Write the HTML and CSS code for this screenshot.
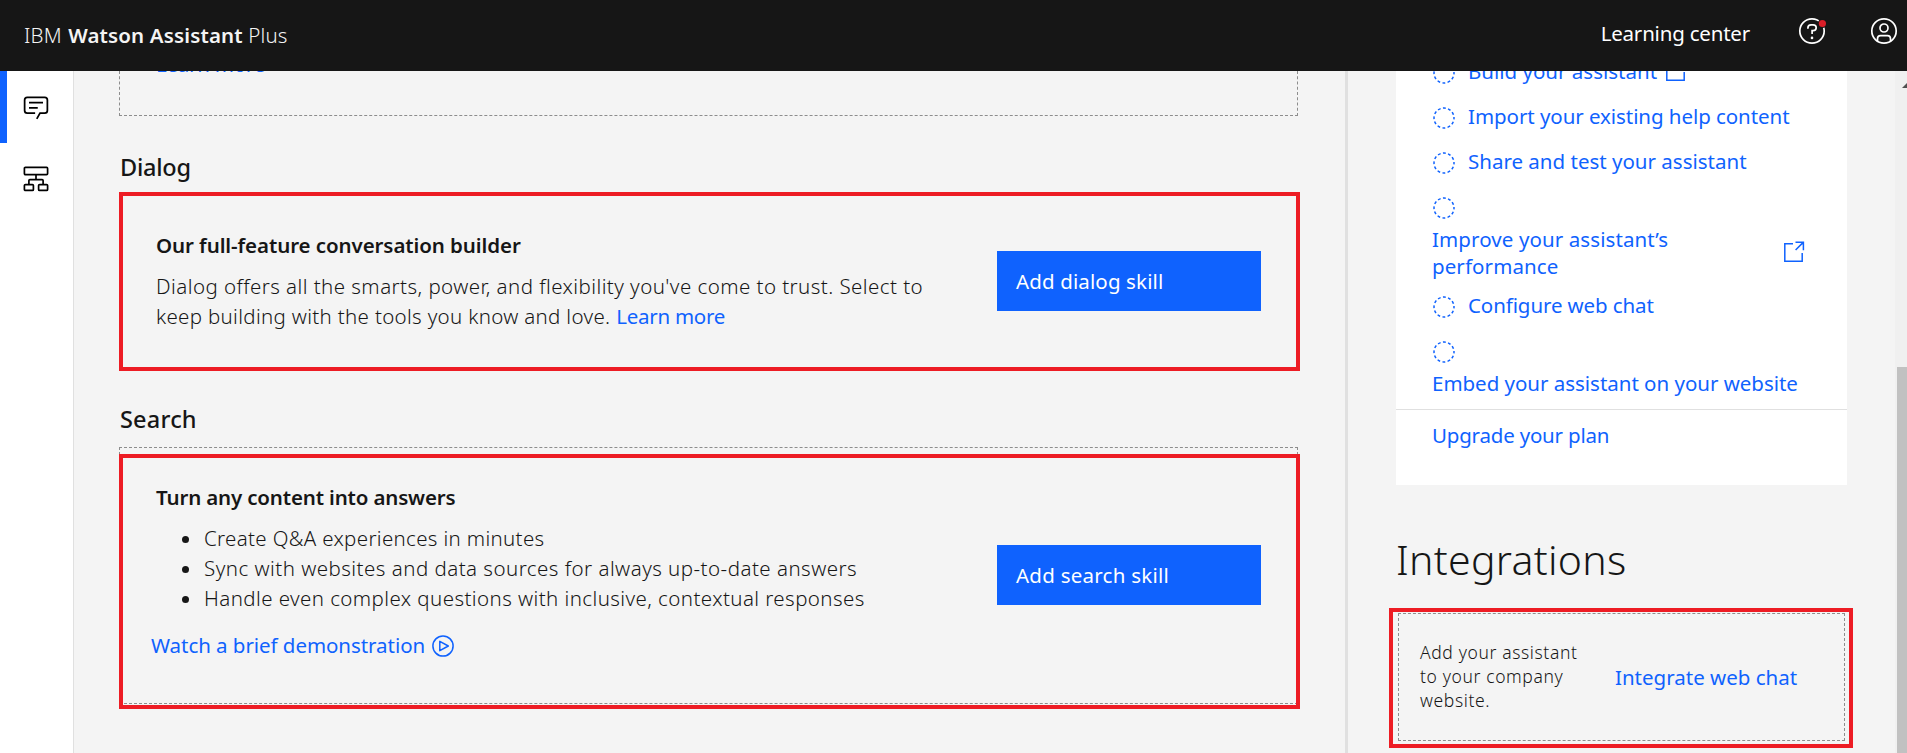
FILE: index.html
```html
<!DOCTYPE html>
<html lang="en">
<head>
<meta charset="utf-8">
<title>IBM Watson Assistant Plus</title>
<link rel="stylesheet" href="styles.css">
</head>
<body>
<svg class="defs" width="0" height="0">
  <symbol id="dash" viewBox="0 0 22 22"><circle cx="11" cy="11" r="10" fill="none" stroke="currentColor" stroke-width="1.5" stroke-dasharray="2.9 2.336" stroke-dashoffset="1.4"/></symbol>
  <symbol id="launch" viewBox="0 0 22 22"><path d="M10 2.8H1.8V20.2H19.2V12M12.5 1.2H20.4V9.2M20.2 1.4L12.6 9" fill="none" stroke="currentColor" stroke-width="1.5"/></symbol>
</svg>
<header class="topbar">
  <div class="brand">IBM <strong>Watson Assistant</strong> Plus</div>
  <nav class="tools">
    <a class="learning">Learning center</a>
    <svg class="help" width="28" height="28" viewBox="0 0 28 28" fill="none" stroke="#fff" stroke-width="1.7"><circle cx="14" cy="14" r="12.2"/><path d="M9.9 11.8V10.9C9.9 9 11.3 7.9 13 7.9H15.1C16.9 7.9 18.2 9 18.2 10.8S16.9 13.6 15.1 13.6H14.1V17"/><circle cx="14" cy="20.9" r="1.3" fill="#fff" stroke="none"/><circle cx="24.4" cy="6.5" r="4.6" fill="#161616" stroke="none"/><circle cx="24.4" cy="6.5" r="3.6" fill="#da1e28" stroke="none"/></svg>
    <svg class="user" width="28" height="28" viewBox="0 0 28 28" fill="none" stroke="#fff" stroke-width="1.7"><circle cx="14" cy="14" r="12.2"/><circle cx="14" cy="11" r="4"/><path d="M7.5 24V21.7C7.5 19.9 8.8 18.7 10.5 18.7H17.5C19.2 18.7 20.5 19.9 20.5 21.7V24"/></svg>
  </nav>
</header>
<div class="shell">
  <aside class="rail">
    <a class="rail-item active"><svg width="28" height="28" viewBox="0 0 32 32"><path d="M17.74 30L16 29l4-7h6a2 2 0 002-2V8a2 2 0 00-2-2H6a2 2 0 00-2 2v12a2 2 0 002 2h9v2H6a4 4 0 01-4-4V8a4 4 0 014-4h20a4 4 0 014 4v12a4 4 0 01-4 4h-4.84zM8 10H24V12H8zM8 16H18V18H8z"/></svg></a>
    <a class="rail-item"><svg width="28" height="28" viewBox="0 0 28 28" fill="none" stroke="#000" stroke-width="1.7"><rect x="2.4" y="2.4" width="23.2" height="7.2" rx="1"/><rect x="2.4" y="19.6" width="9" height="5.8" rx="1"/><rect x="16.6" y="19.6" width="9" height="5.8" rx="1"/><path d="M14 9.6V14.6M6.9 19.6V15.6Q6.9 14.6 7.9 14.6H20.1Q21.1 14.6 21.1 15.6V19.6"/></svg></a>
  </aside>
  <main class="content">
    <section class="tile tile-cut"><a>Learn more</a></section>
    <h2 class="heading">Dialog</h2>
    <section class="tile tile-marked">
      <div class="copy">
        <h3>Our full-feature conversation builder</h3>
        <p>Dialog offers all the smarts, power, and flexibility you've come to trust. Select to<br><span class="line-two">keep building with the tools you know and love.</span> <a>Learn more</a></p>
      </div>
      <button class="primary">Add dialog skill</button>
    </section>
    <h2 class="heading heading-search">Search</h2>
    <section class="tile tile-search">
      <div class="copy">
        <h3 class="tight">Turn any content into answers</h3>
        <ul>
          <li class="first">Create Q&amp;A experiences in minutes</li>
          <li>Sync with websites and data sources for always up-to-date answers</li>
          <li class="last">Handle even complex questions with inclusive, contextual responses</li>
        </ul>
        <a class="watch">Watch a brief demonstration<svg width="24" height="24" viewBox="0 0 24 24" fill="none" stroke="currentColor" stroke-width="1.5"><circle cx="12" cy="12" r="10.1"/><path d="M8.8 7.3V16.7L17.3 12Z" stroke-linejoin="round"/></svg></a>
      </div>
      <button class="primary primary-search">Add search skill</button>
      <div class="frame"></div>
    </section>
  </main>
  <aside class="side">
    <div class="steps">
      <a class="step"><svg class="dot"><use href="#dash"/></svg>Build your assistant<svg class="launch"><use href="#launch"/></svg></a>
      <a class="step step-import"><svg class="dot"><use href="#dash"/></svg>Import your existing help content</a>
      <a class="step"><svg class="dot"><use href="#dash"/></svg>Share and test your assistant</a>
      <a class="step stacked"><svg class="dot"><use href="#dash"/></svg><span class="pair"><span>Improve your assistant’s<br>performance</span><svg class="launch"><use href="#launch"/></svg></span></a>
      <a class="step step-config"><svg class="dot"><use href="#dash"/></svg>Configure web chat</a>
      <a class="step stacked"><svg class="dot"><use href="#dash"/></svg><span>Embed your assistant on your website</span></a>
      <a class="upgrade">Upgrade your plan</a>
    </div>
    <h1>Integrations</h1>
    <div class="integration">
      <div class="integration-body">
        <p>Add your assistant<br>to your company<br>website.</p>
        <a>Integrate web chat</a>
      </div>
    </div>
  </aside>
  <div class="scrollbar"><svg width="12" height="6" viewBox="0 0 12 6"><path d="M0 6L6 0L12 6Z" fill="#505050"/></svg><div class="thumb"></div></div>
</div>
</body>
</html>
```
FILE: styles.css
```css
* { box-sizing: border-box; margin: 0; padding: 0; }
body {
  width: 1907px; height: 753px; overflow: hidden;
  display: flex; flex-direction: column;
  background: #f4f4f4; color: #161616;
  font: 400 20.5px/30px "Noto Sans", "Open Sans", sans-serif;
}
.defs { position: absolute; }
svg { flex: none; }
a { color: #0f62fe; font-weight: 400; }

.topbar {
  height: 71px; flex: none; background: #161616; color: #f4f4f4;
  display: flex; justify-content: space-between; padding: 20px 9px 0 24px;
}
.brand { font-weight: 300; white-space: nowrap; letter-spacing: .15px; }
.brand strong { font-weight: 600; margin-left: 1px; }
.tools { display: flex; margin-top: -3px; align-items: center; height: 28px; }
.learning { color: #fff; letter-spacing: -.2px; margin: 3px 48px 0 0; }
.help { margin-right: 44px; }

.shell { flex: 1; min-height: 0; display: flex; }
.rail { width: 74px; background: #fff; border-right: 1px solid #e0e0e0; flex: none; }
.rail-item { display: flex; height: 72px; padding: 22px 0 0 15px; border-left: 7px solid transparent; }
.rail-item.active { border-left-color: #0f62fe; }

.content { width: 1271px; flex: none; padding-left: 45px; }
.tile { width: 1179px; border: 1px dashed #8d8d8d; padding: 34px 0 0 36px; display: grid; grid-template-columns: 841px 264px; align-items: start; }
.tile-cut { height: 45px; border-top: 0; padding-top: 0; overflow: hidden; }
.tile-cut a { margin-top: -22px; }
.tile-marked { width: 1181px; height: 179px; border: 4px solid #ed1c24; padding-left: 33px; }
.tile-search { height: 257px; position: relative; }
.frame { position: absolute; left: -1px; top: 6px; width: 1181px; height: 255px; border: 4px solid #ed1c24; }
.heading { font-size: 23.5px; line-height: 32px; font-weight: 500; margin: 35px 0 9px 1px; letter-spacing: -.25px; }
.heading-search { margin: 32px 0 12px 1px; letter-spacing: .2px; }
h3 { font-size: 20.5px; line-height: 30px; font-weight: 600; margin-bottom: 11px; letter-spacing: -.08px; }
h3.tight { letter-spacing: -.16px; }
.copy { white-space: nowrap; }
.copy p { font-weight: 300; letter-spacing: .44px; }
.copy p .line-two { letter-spacing: .32px; }
.copy p a, .tile-cut a { letter-spacing: -.25px; }
ul { list-style: none; font-weight: 300; letter-spacing: .47px; margin-bottom: 17px; }
li { padding-left: 26px; display: flex; align-items: center; }
li::before { content: ""; width: 7px; height: 7px; border-radius: 50%; background: #161616; margin: 2px 15px 0 0; }
.first { letter-spacing: .33px; }
.last { letter-spacing: .42px; }
.watch { display: flex; align-items: center; margin-left: -5px; letter-spacing: -.05px; }
.watch svg { margin: 2px 0 0 6px; }
.primary {
  width: 264px; height: 60px; margin-top: 21px; padding: 0 0 0 19px; border: 0;
  background: #0f62fe; color: #fff; text-align: left; font: inherit; letter-spacing: .13px;
}
.primary-search { margin-top: 63px; letter-spacing: .25px; }

.side { width: 550px; flex: none; border-left: 3px solid #e0e0e0; padding-left: 48px; }
.steps { width: 451px; height: 414px; background: #fff; padding-left: 36px; line-height: 27px; overflow: hidden; white-space: nowrap; }
.step { display: flex; height: 27px; align-items: center; margin-bottom: 18px; }
.step:first-child { margin-top: -13px; }
.step-import { letter-spacing: -.06px; }
.dot { width: 22px; height: 22px; margin: 3px 13px 0 1px; }
.launch { width: 22px; height: 22px; margin: 0 0 2px 8px; }
.stacked { flex-direction: column; align-items: flex-start; height: auto; margin-bottom: 12px; letter-spacing: -.02px; }
.stacked .dot { margin: 4px 0 7px 1px; }
.pair { display: flex; align-items: center; width: 373px; justify-content: space-between; letter-spacing: .1px; }
.pair .launch { margin: 0 0 2px; }
.step-config { letter-spacing: -.1px; }
.upgrade { display: block; margin-left: -36px; padding: 12px 0 0 36px; border-top: 1px solid #e0e0e0; letter-spacing: -.2px; }
h1 { font-size: 41px; line-height: 50px; font-weight: 300; margin-top: 49px; letter-spacing: .3px; }
.integration { width: 464px; height: 140px; margin: 24px 0 0 -7px; border: 4px solid #ed1c24; padding: 1px 4px 0 5px; }
.integration-body { height: 128px; border: 1px dashed #8d8d8d; display: grid; grid-template-columns: 195px auto; padding: 26px 0 0 21px; align-items: start; }
.integration p { font-size: 17.5px; line-height: 24px; font-weight: 300; letter-spacing: .62px; }
.integration a { margin-top: 22px; }

.scrollbar { width: 12px; background: #f0f0f0; padding-left: 2px; overflow: hidden; }
.scrollbar svg { display: block; margin: 11px 0 0 5px; }
.thumb { margin-top: 279px; height: 390px; background: #c1c1c1; }
```
